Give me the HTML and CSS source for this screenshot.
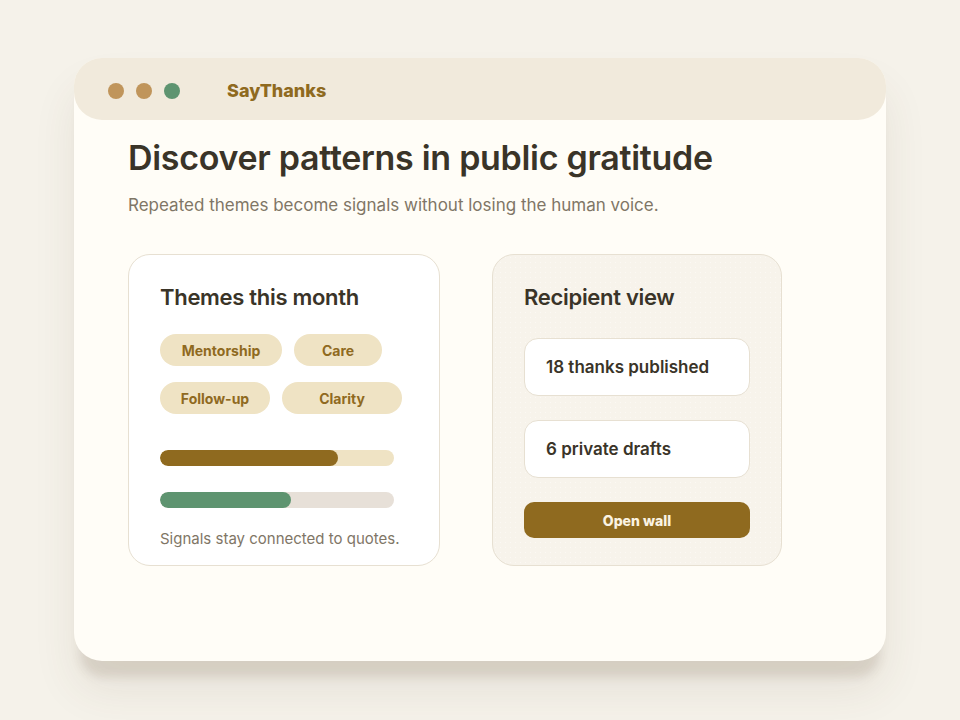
FILE: index.html
```html
<!DOCTYPE html>
<html lang="en">
<head>
    <meta charset="UTF-8">
    <meta name="viewport" content="width=device-width, initial-scale=1.0">
    <title>SayThanks</title>
    <link rel="stylesheet" href="styles.css">
</head>
<body>
    <div class="window">
        <!-- 창 상단 바 -->
        <div class="titlebar">
            <div class="dots">
                <span class="dot"></span>
                <span class="dot"></span>
                <span class="dot dot-green"></span>
            </div>
            <span class="brand">SayThanks</span>
        </div>

        <div class="content">
            <h1>Discover patterns in public gratitude</h1>
            <p class="lead">Repeated themes become signals without losing the human voice.</p>

            <div class="cards">
                <!-- 테마 카드 -->
                <div class="card card-themes">
                    <h2>Themes this month</h2>
                    <div class="chips">
                        <span class="chip chip-mentorship">Mentorship</span>
                        <span class="chip chip-care">Care</span>
                        <span class="chip chip-follow">Follow-up</span>
                        <span class="chip chip-clarity">Clarity</span>
                    </div>
                    <div class="bars">
                        <div class="bar bar-gold"><div class="fill" style="width: 76%"></div></div>
                        <div class="bar bar-green"><div class="fill" style="width: 56%"></div></div>
                    </div>
                    <p class="note">Signals stay connected to quotes.</p>
                </div>

                <!-- 수신자 카드 -->
                <div class="card card-recipient">
                    <h2>Recipient view</h2>
                    <div class="stat">18 thanks published</div>
                    <div class="stat">6 private drafts</div>
                    <button class="button-open">Open wall</button>
                </div>
            </div>
        </div>
    </div>
</body>
</html>
```

FILE: styles.css
```css
body {
    margin: 0;
    font-family: Inter, "Noto Sans", sans-serif;
    background-color: #f5f2ea;
    height: 720px;
    display: flex;
    justify-content: center;
    align-items: flex-start;
}

.window {
    margin-top: 58px;
    width: 812px;
    height: 603px;
    background-color: #fffdf7;
    border-radius: 28px;
    box-shadow: 0 22px 10px -6px rgba(90, 70, 40, 0.13), 0 30px 44px rgba(90, 70, 40, 0.09);
}

.titlebar {
    box-sizing: border-box;
    height: 62px;
    padding-top: 3px;
    background-color: #f1eadc;
    border-radius: 28px;
    display: flex;
    align-items: center;
    padding-left: 34px;
    gap: 47px;
}

.dots {
    display: flex;
    gap: 12px;
}

.dot {
    width: 16px;
    height: 16px;
    border-radius: 50%;
    background-color: #c0955b;
}

.dot-green { background-color: #5e9470; }

.brand {
    font-size: 18px;
    font-weight: 800;
    color: #8f6a1f;
}

.content {
    padding: 17px 54px 0 54px;
}

h1 {
    margin: 0;
    font-size: 34px;
    font-weight: 600;
    letter-spacing: -0.3px;
    line-height: 42px;
    color: #3a3428;
}

.lead {
    margin: 14px 0 0 0;
    font-size: 17px;
    line-height: 24px;
    color: #7f7666;
}

.cards {
    display: flex;
    gap: 52px;
    margin-top: 37px;
}

.card {
    box-sizing: border-box;
    height: 312px;
    border: 1px solid #e7e0d2;
    border-radius: 22px;
    padding: 27px 31px;
}

.card h2 {
    margin: 0;
    font-size: 22px;
    font-weight: 600;
    letter-spacing: -0.3px;
    line-height: 30px;
    color: #3a3428;
}

.card-themes {
    width: 312px;
    background-color: #ffffff;
}

.chips {
    display: flex;
    flex-wrap: wrap;
    gap: 16px 12px;
    margin-top: 22px;
    width: 250px;
}

.chip {
    height: 32px;
    border-radius: 16px;
    background-color: #efe3c4;
    color: #8f6a1f;
    font-size: 14px;
    font-weight: 700;
    display: flex;
    align-items: center;
    justify-content: center;
}

.chip-mentorship { width: 122px; }
.chip-care { width: 88px; }
.chip-follow { width: 110px; }
.chip-clarity { width: 120px; }

.bars {
    margin-top: 36px;
    display: flex;
    flex-direction: column;
    gap: 26px;
}

.bar {
    width: 234px;
    height: 16px;
    border-radius: 8px;
    overflow: hidden;
}

.bar .fill {
    height: 100%;
    border-radius: 8px;
}

.bar-gold { background-color: #efe3c4; }
.bar-gold .fill { background-color: #8f6a1f; }
.bar-green { background-color: #e7e0d8; }
.bar-green .fill { background-color: #5e9470; }

.note {
    margin: 21px 0 0 0;
    font-size: 15px;
    line-height: 20px;
    color: #7f7666;
}

.card-recipient {
    width: 290px;
    background-color: #f7f3eb;
    background-image: radial-gradient(rgba(255, 255, 255, 0.45) 0.6px, transparent 1px);
    background-size: 5px 5px;
    display: flex;
    flex-direction: column;
}

.stat {
    box-sizing: border-box;
    width: 226px;
    height: 58px;
    margin-top: 24px;
    background-color: #ffffff;
    border: 1px solid #e7e0d2;
    border-radius: 14px;
    padding-left: 21px;
    display: flex;
    align-items: center;
    font-size: 17px;
    font-weight: 600;
    color: #3a3428;
}

.card-recipient h2 + .stat { margin-top: 26px; }

.button-open {
    margin-top: 24px;
    width: 226px;
    height: 36px;
    border: none;
    border-radius: 10px;
    background-color: #8f6a1f;
    color: #fbf3e2;
    font-family: Inter, "Noto Sans", sans-serif;
    font-size: 14px;
    font-weight: 800;
    cursor: pointer;
}
```
